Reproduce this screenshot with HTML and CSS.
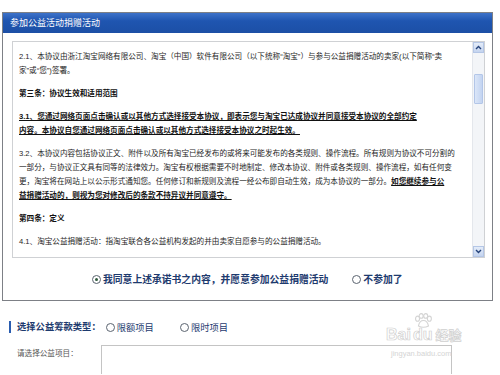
FILE: index.html
```html
<!DOCTYPE html>
<html lang="zh-CN">
<head>
  <meta charset="UTF-8">
  <meta name="viewport" content="width=device-width, initial-scale=1.0">
  <title>参加公益活动捐赠活动</title>
  <link rel="stylesheet" href="styles.css">
</head>
<body>
  <div class="dialog">
    <div class="dialog-title">参加公益活动捐赠活动</div>
    <div class="dialog-body">
      <div class="terms">
        <div class="terms-text">
          <p>2.1、本协议由浙江淘宝网络有限公司、淘宝（中国）软件有限公司（以下统称“淘宝”）与参与公益捐赠活动的卖家(以下简称“卖<br>家”或“您”)签署。</p>
          <p class="strong">第三条：协议生效和适用范围</p>
          <p class="strong under">3.1、您通过网络页面点击确认或以其他方式选择接受本协议，即表示您与淘宝已达成协议并同意接受本协议的全部约定<br>内容。本协议自您通过网络页面点击确认或以其他方式选择接受本协议之时起生效。</p>
          <p>3.2、本协议内容包括协议正文、附件以及所有淘宝已经发布的或将来可能发布的各类规则、操作流程。所有规则为协议不可分割的<br>一部分，与协议正文具有同等的法律效力。淘宝有权根据需要不时地制定、修改本协议、附件或各类规则、操作流程，如有任何变<br>更，淘宝将在网站上以公示形式通知您。任何修订和新规则及流程一经公布即自动生效，成为本协议的一部分。<b class="under">如您继续参与公<br>益捐赠活动的，则视为您对修改后的条款不持异议并同意遵守。</b></p>
          <p class="strong">第四条：定义</p>
          <p>4.1、淘宝公益捐赠活动：指淘宝联合各公益机构发起的并由卖家自愿参与的公益捐赠活动。</p>
        </div>
        <div class="scrollbar">
          <span class="sb-btn">
            <svg width="7" height="5" viewBox="0 0 7 5"><path d="M1 4 L3.5 1.5 L6 4" fill="none" stroke="#24427a" stroke-width="1.4"/></svg>
          </span>
          <span class="sb-track"><span class="sb-thumb"></span></span>
          <span class="sb-btn">
            <svg width="7" height="5" viewBox="0 0 7 5"><path d="M1 1 L3.5 3.5 L6 1" fill="none" stroke="#24427a" stroke-width="1.4"/></svg>
          </span>
        </div>
      </div>
      <div class="agree-row">
        <span class="radio-item"><span class="radio checked"></span>我同意上述承诺书之内容，并愿意参加公益捐赠活动</span>
        <span class="radio-item"><span class="radio"></span>不参加了</span>
      </div>
    </div>
  </div>

  <div class="fund-type">
    <span class="fund-label">选择公益筹款类型：</span>
    <span class="radio-item"><span class="radio"></span>限额项目</span>
    <span class="radio-item"><span class="radio"></span>限时项目</span>
  </div>

  <div class="project-row">
    <span class="project-label">请选择公益项目：</span>
    <div class="project-box"></div>
  </div>

  <div class="watermark">
    <svg class="paw" width="20" height="15" viewBox="0 0 22 16">
      <g fill="none" stroke="#d4d4d4" stroke-width="1.2">
        <ellipse cx="5" cy="6" rx="2.2" ry="2.8"/>
        <ellipse cx="9" cy="3" rx="2.2" ry="2.6"/>
        <ellipse cx="14" cy="3" rx="2.2" ry="2.6"/>
        <ellipse cx="18" cy="6" rx="2.2" ry="2.8"/>
        <path d="M6 14 C7 9 10 8 11.5 8 C13 8 16 9 17 14 C14 15.5 9 15.5 6 14 Z"/>
      </g>
    </svg>
    <div class="wm-logo">Bai<span class="wm-du">du</span><span class="wm-cn">经验</span></div>
    <div class="wm-url">jingyan.baidu.com</div>
  </div>
</body>
</html>
```

FILE: styles.css
```css
html {
  overflow: hidden;
}
body {
  margin: 0;
  padding-top: 12px;
  background: #fff;
  font-family: "Liberation Sans", "Noto Sans CJK SC", sans-serif;
  color: #333;
  position: relative;
}
.dialog {
  margin-left: 2px;
  width: 489px;
  border: 1px solid #7d8086;
  background: #fff;
}
.dialog-title {
  height: 20px;
  line-height: 20px;
  padding-left: 7px;
  font-size: 9px;
  color: #fff;
  background: linear-gradient(#3d72c9, #1f55b0 40%, #1c4fa6);
}
.dialog-body {
  padding: 8px 7px 0 9px;
}
.terms {
  display: flex;
  height: 215px;
  border: 1px solid #cfd1d4;
  overflow: hidden;
}
.terms-text {
  flex: 1;
  padding: 8px 0 0 6px;
  font-size: 7.6px;
  line-height: 14px;
  white-space: nowrap;
  color: #1e1e1e;
}
.terms-text p {
  margin: 0 0 9px;
}
.strong {
  font-weight: bold;
  color: #111;
}
.terms-text b {
  color: #111;
}
.under {
  text-decoration: underline;
}
.scrollbar {
  width: 11px;
  display: flex;
  flex-direction: column;
  background: #f3f5f8;
  border-left: 1px solid #e4e7ec;
}
.sb-btn {
  height: 11px;
  display: flex;
  align-items: center;
  justify-content: center;
  background: linear-gradient(#e4ecf9, #c4d4ef);
  border: 1px solid #b4c6e6;
  box-sizing: border-box;
}
.sb-track {
  flex: 1;
  padding-top: 21px;
}
.sb-thumb {
  display: block;
  height: 30px;
  margin: 0 1px;
  background: linear-gradient(90deg, #dbe6f8, #c3d4f1);
  border: 1px solid #b3c6e8;
  border-radius: 1px;
  box-sizing: border-box;
}
.agree-row {
  height: 42px;
  display: flex;
  align-items: center;
  padding-left: 80px;
  gap: 24px;
  font-size: 9.8px;
  font-weight: bold;
  color: #1d3a6e;
}
.radio-item {
  display: inline-flex;
  align-items: center;
  gap: 2px;
}
.radio {
  width: 9px;
  height: 9px;
  border: 1px solid #5b6470;
  border-radius: 50%;
  box-sizing: border-box;
  background: #fff;
  position: relative;
}
.radio.checked::after {
  content: "";
  position: absolute;
  left: 2px;
  top: 2px;
  width: 3px;
  height: 3px;
  border-radius: 50%;
  background: #2f5a3c;
}
.fund-type {
  display: flex;
  align-items: center;
  margin-top: 19px;
  padding-left: 9px;
  height: 14px;
  font-size: 9.3px;
  color: #1d3a6e;
}
.fund-label {
  font-weight: bold;
  border-left: 2px solid #2a5db0;
  padding-left: 6px;
  line-height: 12px;
  margin-right: 5px;
}
.fund-type .radio-item {
  margin-right: 26px;
}
.project-row {
  display: flex;
  margin-top: 11px;
}
.project-label {
  width: 84px;
  padding: 2px 0 0 17px;
  font-size: 7.6px;
  color: #555;
}
.project-box {
  width: 349px;
  height: 28px;
  border: 1px solid #c4c4c4;
  border-bottom: none;
}
.watermark {
  position: absolute;
  left: 386px;
  top: 313px;
  width: 84px;
  white-space: nowrap;
  color: #dedede;
}
.paw {
  position: absolute;
  left: 27px;
  top: 0;
}
.wm-logo {
  margin-top: 12px;
  font-size: 16px;
  line-height: 19px;
  font-weight: bold;
  color: #fff;
  -webkit-text-stroke: 0.7px #cfcfcf;
}
.wm-du {
  margin-left: 2px;
}
.wm-cn {
  margin-left: 3px;
  font-size: 13px;
}
.wm-url {
  font-size: 7.5px;
  line-height: 10px;
  color: #d4d4d4;
  margin-top: 4px;
  padding-left: 5px;
}
```
